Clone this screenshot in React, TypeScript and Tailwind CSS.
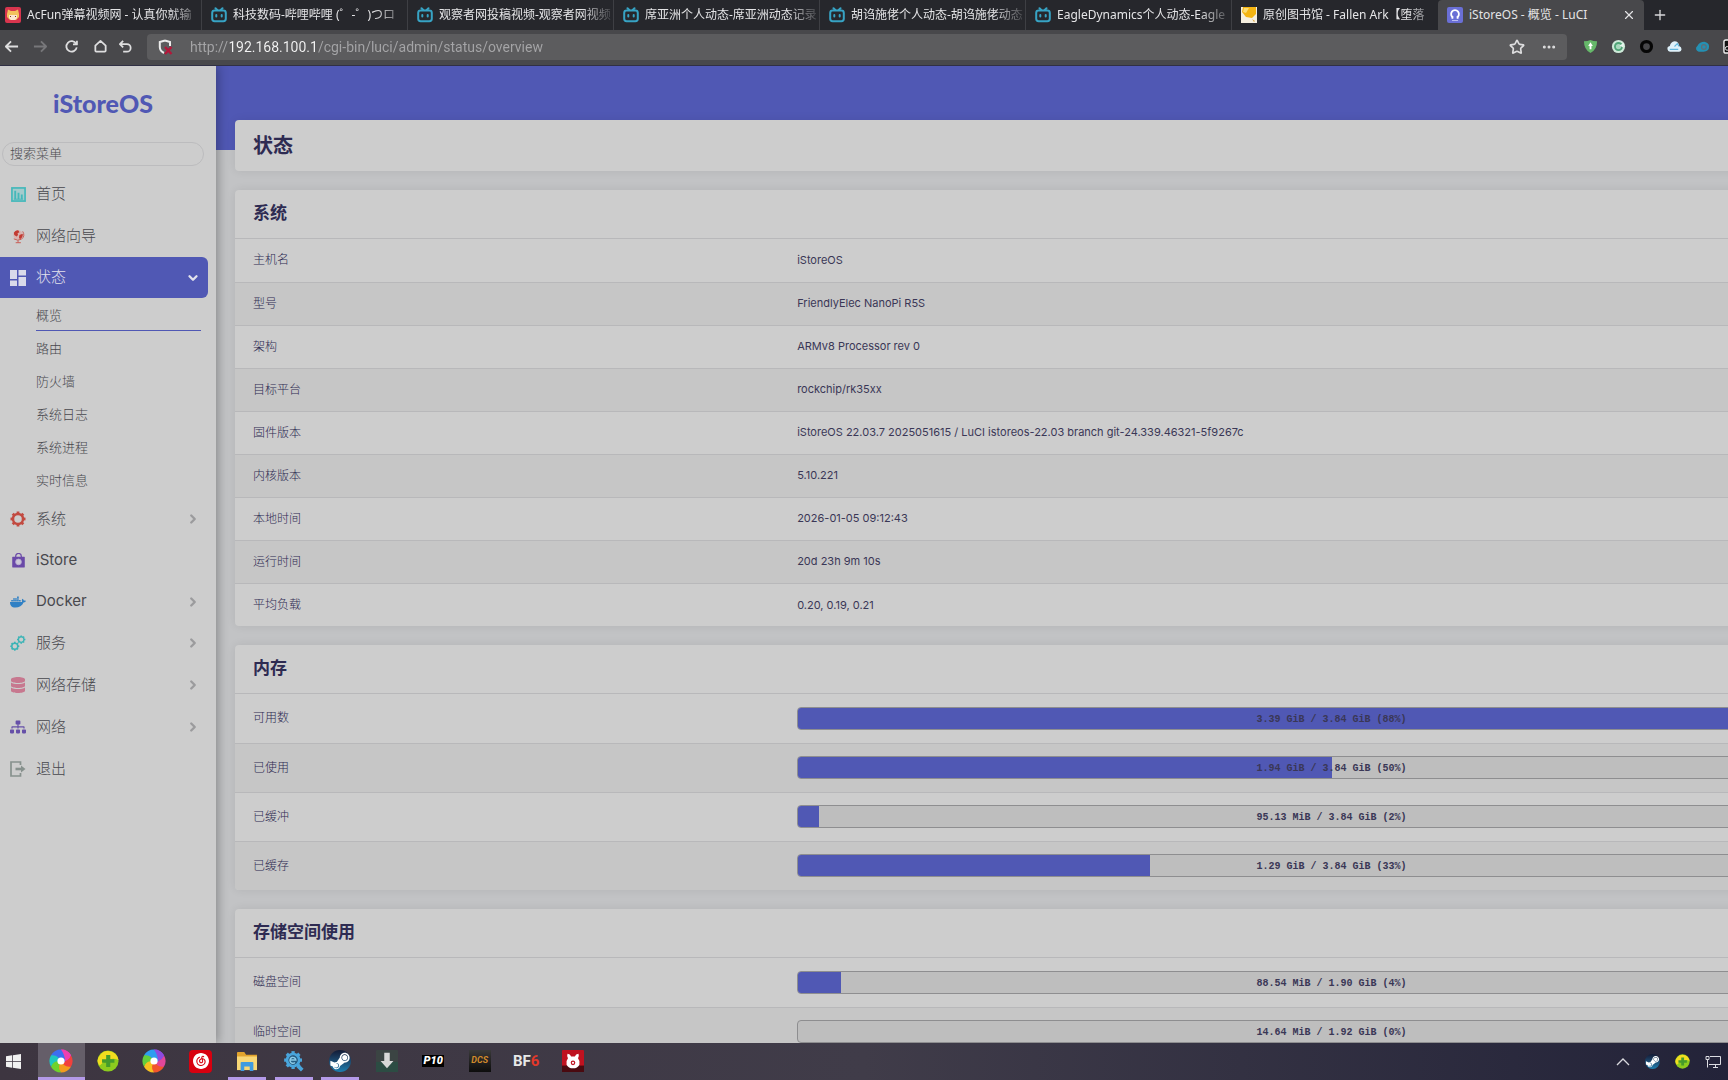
import { useState } from "react";
import clsx from "clsx";
import { FaDatabase, FaDocker, FaSitemap, FaSteamSymbol } from "react-icons/fa";
import { SiNeteasecloudmusic } from "react-icons/si";
import { ChevronDown, ChevronRight, Ellipsis, Plus, Star, X } from "lucide-react";

/* ---------- types ---------- */
type BrowserTab = {
  title: string;
  icon: React.ReactNode;
  active?: boolean;
};

type MenuItem = {
  label: string;
  icon: React.ReactNode;
  latin?: boolean;
  expandable?: boolean;
  children?: string[];
};

type Usage = {
  label: string;
  text: string;
  percent: number;
};

/* ---------- browser icons ---------- */
function TvIcon() {
  return (
    <svg viewBox="0 0 16 16" className="size-4" fill="none" stroke="#37a3c4" strokeWidth="2" strokeLinecap="round">
      <path d="M4.5 1.2 6.3 3M11.500 1.200 9.700 3" />
      <rect x="1.200" y="3.600" width="13.600" height="10.600" rx="2.400" />
      <path d="M5.300 8v1.600M10.700 8v1.600" />
    </svg>
  );
}

function AcfunIcon() {
  return (
    <svg viewBox="0 0 16 16" className="size-4">
      <rect width="16" height="16" rx="2" fill="#d8354e" />
      <path d="M2 7 3 2.500 6 4h4l3-1.500L14 7v3l-3 3H5l-3-3z" fill="#f3c35c" />
      <path d="M4 8h8v3l-2 2H6l-2-2z" fill="#fbe6d0" />
      <path d="M5.500 9v1M10.500 9v1" stroke="#7a3326" />
    </svg>
  );
}

function LibraryIcon() {
  return (
    <svg viewBox="0 0 16 16" className="size-4">
      <rect width="16" height="16" fill="#f6efe0" />
      <path d="M2 0h13v7l-4 4-6-1-4-5z" fill="#f5b512" />
      <path d="M3 1h5l-3 5-3-1z" fill="#fbdc74" />
      <path d="m11 12 3 2-1 1z" fill="#d9a441" />
    </svg>
  );
}

function LuciIcon() {
  return (
    <svg viewBox="0 0 16 16" className="size-4">
      <rect width="16" height="16" rx="2" fill="#6a6fd6" />
      <path d="M6.300 10.800H4.500M9.700 10.800h1.800M6.300 10.600a3.900 3.900 0 1 1 3.400 0" fill="none" stroke="#fff" strokeWidth="1.800" />
      <path d="M5 13.500h6" stroke="#b9bcf0" />
    </svg>
  );
}

const navIcon = {
  back: <path d="M15 8H2M7.500 2.500 2 8l5.500 5.500" />,
  forward: <path d="M1 8h13M8.500 2.500 14 8l-5.500 5.500" />,
  reload: <path d="M13 5.200A5.600 5.600 0 1 0 13.600 9M13.800 1.800v4H9.600" />,
  home: <path d="M8 2 2.500 7v5.500q0 1 1 1h9q1 0 1-1V7z" />,
  undo: <path d="M2.500 5.500h7a4 4 0 0 1 0 8H5.500M5.500 2 2 5.500 5.500 9" />,
};

function NavButton({ name, label, dim }: { name: keyof typeof navIcon; label: string; dim?: boolean }) {
  return (
    <button type="button" aria-label={label} className={dim ? "text-[#77777a]" : "text-[#dededf]"}>
      <svg viewBox="0 0 16 16" className="size-[15px]" fill="none" stroke="currentColor" strokeWidth="1.900" strokeLinejoin="round">
        {navIcon[name]}
      </svg>
    </button>
  );
}

function InsecureIcon() {
  return (
    <svg viewBox="0 0 16 16" className="size-4" fill="none">
      <path d="M8 1.500 13 3v4M7 14C4 12.500 2.800 10.500 2.800 8V3L8 1.500" stroke="#ececec" strokeWidth="2" />
      <path d="m8 8 6.500 7M14.500 8 8 15" stroke="#b3173a" strokeWidth="2.400" />
    </svg>
  );
}

const extensions = [
  {
    label: "安全防护",
    icon: (
      <>
        <path d="M1 2.500Q5 2.500 8 1q3 1.500 7 1.500 0 9-7 12.500Q1 11.500 1 2.500" fill="#66b86a" />
        <path d="M8 3.500 5.500 7.500H7V11h2V7.500h1.500z" fill="#fff" />
      </>
    ),
  },
  {
    label: "刷新助手",
    icon: (
      <>
        <circle cx="8" cy="8" r="7" fill="#cde9d8" />
        <circle cx="8" cy="8" r="3.800" fill="#a9d8bd" stroke="#4fa577" strokeWidth="2" />
        <path d="m9 7 5-3-1 5z" fill="#e8f7ee" />
      </>
    ),
  },
  {
    label: "圆环",
    icon: <circle cx="8" cy="8" r="5.300" fill="none" stroke="#060606" strokeWidth="3.400" />,
  },
  {
    label: "云盘",
    icon: (
      <>
        <path d="M4 13.500a3 3 0 0 1-1-6q1-4.500 5-5 4.500 0 5 5 2.500 1 2.500 3.500 0 2.500-2.500 2.500z" fill="#dff1fa" />
        <path d="M3 11h9M8 8l3-3 2 3" stroke="#5fb6de" strokeWidth="1.200" fill="none" />
      </>
    ),
  },
  {
    label: "云同步",
    icon: (
      <>
        <path d="M4 13.500a3.300 3.300 0 0 1-1.500-6Q5 3 10 3q5 1 5 5 0 5.500-6 5.500z" fill="#2490b3" />
        <circle cx="9.500" cy="8.500" r="2.500" fill="none" stroke="#5e6d78" strokeWidth="1.300" />
      </>
    ),
  },
];

/* ---------- sidebar icons ---------- */
function HomeChartIcon() {
  return (
    <svg viewBox="0 0 16 16" className="size-[15px]" fill="none" stroke="#45b8ba">
      <rect x="1" y="1" width="14" height="14" fill="#a5cbcc" strokeWidth="1.800" />
      <path d="M4.500 4v9M8 6v7M11.500 8v5" strokeWidth="2" />
      <path d="M3 13h10" />
    </svg>
  );
}

function GlobeIcon() {
  return (
    <svg viewBox="0 0 16 16" className="size-[15px]">
      <circle cx="7.500" cy="6.300" r="5" fill="#d9b3b0" />
      <path d="M3 4q2-3.500 5-2.500l1 2-2 1 .5 2L6 8 3.500 6.500zM9 6.500l3.500-1.500q.5 4-3 6L8.500 9z" fill="#c23a32" />
      <path d="M12.500 2.500q3 5-1.500 8.500-4 2-8-.5M7.500 12v2.500M5 14.600h5.500" fill="none" stroke="#c9574f" />
    </svg>
  );
}

function DashboardIcon() {
  return (
    <svg viewBox="0 0 16 16" className="size-4" fill="#d9daea">
      <path d="M0 0h7v9H0zM0 10.500h7V16H0zM8.500 0H16v5.500H8.500zM8.500 7H16v9H8.500z" />
    </svg>
  );
}

/* toothed ring: eight teeth round a solid band */
function Gear({ x, y, r, color }: { x: number; y: number; r: number; color: string }) {
  return (
    <g fill="none" stroke={color} transform={`translate(${x} ${y})`}>
      <circle r={r} strokeWidth={r * 0.5} />
      {[0, 45, 90, 135, 180, 225, 270, 315].map((a) => (
        <path key={a} d={`M0 ${-r}V${-r * 1.5}`} strokeWidth={r * 0.55} transform={`rotate(${a})`} />
      ))}
    </g>
  );
}

function BagIcon() {
  return (
    <svg viewBox="0 0 16 16" className="size-[15px]">
      <path d="M5 4.500V3.500a3 3 0 0 1 6 0v1" fill="none" stroke="#6a49a8" strokeWidth="1.300" />
      <rect x="1.300" y="4" width="13.400" height="11.500" rx="0.500" fill="#6a49a8" />
      <circle cx="8" cy="9.500" r="3" fill="#cdc8d8" stroke="#b9aed2" strokeWidth="1" />
    </svg>
  );
}

function LogoutIcon() {
  return (
    <svg viewBox="0 0 16 16" className="size-4" fill="none" stroke="#87918d">
      <path d="M10.500 4V1H1v14h9.500v-3" strokeWidth="1.700" />
      <path d="M5.500 8H11" strokeWidth="2.600" />
      <path d="m11 4.500 4.500 3.500L11 11.500z" fill="#87918d" stroke="none" />
    </svg>
  );
}

/* ---------- taskbar icons ---------- */
function SwirlIcon({ alt }: { alt?: boolean }) {
  const colors = alt
    ? ["#8c4be0", "#e0479a", "#f2552c", "#f7c11f", "#62cf3c", "#2d9df0"]
    : ["#ee3fb0", "#f2403c", "#f39b1d", "#6fd22c", "#1fc6c0", "#3d6df0"];
  return (
    <svg viewBox="-12 -12 24 24" className="size-[24px]">
      <circle r="9" fill={colors[0]} />
      {colors.map((c, i) => (
        <path key={c} d="M0-11.500A11.500 11.500 0 0 1 10-5.700Q9 1 2 4L-2 1Q5-5 0-11.500" fill={c} transform={`rotate(${i * 60})`} />
      ))}
      <path d="M0-11.500A11.500 11.500 0 0 1 10-5.700Q7 0 4 0 4-6 0-11.500" fill={colors[0]} />
      <circle r="3.600" fill="#fff" />
    </svg>
  );
}

function SafeIcon({ size }: { size: string }) {
  return (
    <svg viewBox="0 0 24 24" className={size}>
      <circle cx="12" cy="12" r="11.500" fill="#8ccb1e" />
      <path d="M3 6Q8-1 16 2q6 2 7.500 9Q14 6 3 17-2 12 3 6" fill="#f2dd1f" />
      <path d="M10 5.500h4.500V10H19v4h-4.500v4.500H10V14H5.500v-4H10z" fill="#459c2b" />
    </svg>
  );
}

function FolderIcon() {
  return (
    <svg viewBox="0 0 24 22" className="h-[20px] w-[22px]">
      <path d="M1 2q0-1 1-1h7l2 3h12v17H1z" fill="#e2a42d" />
      <path d="M1 6h22v15H1z" fill="#f8d776" />
      <path d="M5 22v-9q0-1 1-1h12q1 0 1 1v9h-4v-5H9v5z" fill="#3f9be0" />
    </svg>
  );
}

function ToolIcon() {
  return (
    <svg viewBox="-12 -12 24 24" className="size-[22px]">
      <Gear x={-1} y={-1} r={6.500} color="#49a5dc" />
      <circle cx="-1" cy="-1" r="5" fill="#245f86" />
      <path d="M-4-1h6a3.200 3.200 0 1 0-1 2.600" fill="none" stroke="#8ccbe8" strokeWidth="1.600" />
      <path d="M4 5 9 10" stroke="#49a5dc" strokeWidth="4" />
    </svg>
  );
}

function SteamIcon({ size }: { size: string }) {
  return (
    <span className={clsx("flex items-center justify-center rounded-full bg-gradient-to-b from-[#121b36] to-[#1c7fb0]", size)}>
      <FaSteamSymbol className="size-full text-white" />
    </span>
  );
}

function DownloadIcon() {
  return (
    <svg viewBox="0 0 24 24" className="size-[22px]">
      <rect width="24" height="24" rx="1" fill="#3b4443" />
      <path d="M0 13h24v11H0z" fill="#2c4c43" />
      <path d="M9 3h6v9h4l-7 8-7-8h4z" fill="#d8d8d8" />
    </svg>
  );
}

function BearIcon() {
  return (
    <svg viewBox="0 0 24 24" className="size-[22px]">
      <rect width="24" height="24" rx="1" fill="#bf1220" />
      <path d="M0 17h24v7H0z" fill="#4a0a10" />
      <path d="M6 4q3 0 4 3h4q1-3 4-3 1 3-.5 5Q20 12 19 16q-2 4-7 4t-7-4q-1-4 1.500-7Q5 7 6 4" fill="#fff" />
      <circle cx="12" cy="14" r="2.500" fill="#bf1220" />
      <circle cx="12" cy="14" r="1.200" fill="#fff" />
    </svg>
  );
}

/* ---------- data ---------- */
const tabs: BrowserTab[] = [
  { title: "AcFun弹幕视频网 - 认真你就输", icon: <AcfunIcon /> },
  { title: "科技数码-哔哩哔哩 (゜-゜)つロ", icon: <TvIcon /> },
  { title: "观察者网投稿视频-观察者网视频", icon: <TvIcon /> },
  { title: "席亚洲个人动态-席亚洲动态记录", icon: <TvIcon /> },
  { title: "胡诌施佬个人动态-胡诌施佬动态", icon: <TvIcon /> },
  { title: "EagleDynamics个人动态-Eagle", icon: <TvIcon /> },
  { title: "原创图书馆 - Fallen Ark【堕落", icon: <LibraryIcon /> },
  { title: "iStoreOS - 概览 - LuCI", icon: <LuciIcon />, active: true },
];

const menu: MenuItem[] = [
  { label: "首页", icon: <HomeChartIcon /> },
  { label: "网络向导", icon: <GlobeIcon /> },
  {
    label: "状态",
    icon: <DashboardIcon />,
    children: ["概览", "路由", "防火墙", "系统日志", "系统进程", "实时信息"],
  },
  {
    label: "系统",
    expandable: true,
    icon: (
      <svg viewBox="0 0 16 16" className="size-4">
        <Gear x={8} y={8} r={5} color="#c24a40" />
      </svg>
    ),
  },
  { label: "iStore", latin: true, icon: <BagIcon /> },
  { label: "Docker", latin: true, expandable: true, icon: <FaDocker className="size-4 text-[#3080c4]" /> },
  {
    label: "服务",
    expandable: true,
    icon: (
      <svg viewBox="0 0 16 16" className="size-4">
        <Gear x={4.800} y={11.200} r={3} color="#3cb4b6" />
        <Gear x={11.200} y={4.600} r={2.800} color="#3cb4b6" />
      </svg>
    ),
  },
  { label: "网络存储", expandable: true, icon: <FaDatabase className="size-4 text-[#c7788f]" /> },
  { label: "网络", expandable: true, icon: <FaSitemap className="size-4 text-[#6650a8]" /> },
  { label: "退出", icon: <LogoutIcon /> },
];

const systemRows: [string, string][] = [
  ["主机名", "iStoreOS"],
  ["型号", "FriendlyElec NanoPi R5S"],
  ["架构", "ARMv8 Processor rev 0"],
  ["目标平台", "rockchip/rk35xx"],
  ["固件版本", "iStoreOS 22.03.7 2025051615 / LuCI istoreos-22.03 branch git-24.339.46321-5f9267c"],
  ["内核版本", "5.10.221"],
  ["本地时间", "2026-01-05 09:12:43"],
  ["运行时间", "20d 23h 9m 10s"],
  ["平均负载", "0.20, 0.19, 0.21"],
];

const memoryRows: Usage[] = [
  { label: "可用数", text: "3.39 GiB / 3.84 GiB (88%)", percent: 88 },
  { label: "已使用", text: "1.94 GiB / 3.84 GiB (50%)", percent: 50 },
  { label: "已缓冲", text: "95.13 MiB / 3.84 GiB (2%)", percent: 2 },
  { label: "已缓存", text: "1.29 GiB / 3.84 GiB (33%)", percent: 33 },
];

const storageRows: Usage[] = [
  { label: "磁盘空间", text: "88.54 MiB / 1.90 GiB (4%)", percent: 4 },
  { label: "临时空间", text: "14.64 MiB / 1.92 GiB (0%)", percent: 0 },
];

const taskbarApps = [
  { label: "浏览器", icon: <SwirlIcon />, active: true },
  { label: "安全卫士", icon: <SafeIcon size="size-[22px]" /> },
  { label: "极速浏览器", icon: <SwirlIcon alt /> },
  {
    label: "网易云音乐",
    icon: (
      <span className="flex size-[23px] items-center justify-center rounded bg-[#d8000f]">
        <SiNeteasecloudmusic className="size-4 text-white" />
      </span>
    ),
  },
  { label: "文件资源管理器", icon: <FolderIcon />, running: true },
  { label: "设置工具", icon: <ToolIcon />, running: true },
  { label: "Steam", icon: <SteamIcon size="size-[22px]" />, running: true },
  { label: "下载", icon: <DownloadIcon /> },
  {
    label: "P10",
    icon: (
      <span className="flex h-3 w-[22px] items-center justify-center bg-black text-[11px] font-black italic leading-3 text-white">P10</span>
    ),
  },
  {
    label: "DCS",
    icon: (
      <span className="flex size-[22px] items-center justify-center bg-gradient-to-b from-[#3a3a3a] to-[#0d0d0d] text-[9px] font-bold italic text-[#d18a2a]">DCS</span>
    ),
  },
  {
    label: "BF6",
    icon: (
      <span className="text-[15px] font-bold leading-none text-[#e8e8e8]">
        BF<span className="text-[#e2382a]">6</span>
      </span>
    ),
  },
  { label: "弹幕游戏", icon: <BearIcon /> },
];

/* ---------- browser chrome ---------- */
function TabStrip() {
  return (
    <div className="flex h-[30px] shrink-0 items-stretch overflow-hidden bg-[#26272c]">
      {tabs.map((t, i) => (
        <div
          key={t.title}
          className={clsx(
            "flex items-center gap-1.5 text-xs text-[#e4e4e6]",
            i === 0 ? "w-[202px] pl-[5px]" : "w-[206px] pl-[9px]",
            t.active ? "rounded-t bg-[#48484b]" : i < 6 && "border-r border-[#3e3f44]"
          )}
        >
          <span className="shrink-0">{t.icon}</span>
          <a
            href="#"
            className={clsx(
              "flex-1 whitespace-nowrap",
              !t.active && "[mask-image:linear-gradient(to_right,black_82%,rgba(0,0,0,0.1))]"
            )}
          >
            {t.title}
          </a>
          {t.active && (
            <button type="button" aria-label="关闭标签页" className="mr-2">
              <X className="size-3.5" />
            </button>
          )}
        </div>
      ))}
      <button type="button" aria-label="新建标签页" className="ml-2 text-[#d8d8da]">
        <Plus className="size-4" />
      </button>
    </div>
  );
}

function Toolbar() {
  const [url, setUrl] = useState("http://192.168.100.1/cgi-bin/luci/admin/status/overview");
  return (
    <div className="flex h-9 shrink-0 items-center overflow-hidden border-b border-[#303044] bg-[#48484b] pb-0.5">
      <div className="flex w-[147px] shrink-0 items-center pl-1">
        <NavButton name="back" label="后退" />
        <span className="w-3.5" />
        <NavButton name="forward" label="前进" dim />
        <span className="w-4" />
        <NavButton name="reload" label="刷新" />
        <span className="w-3.5" />
        <NavButton name="home" label="主页" />
        <span className="w-2.5" />
        <NavButton name="undo" label="恢复" />
      </div>
      <div className="flex h-[26px] flex-1 items-center rounded bg-[#5c5c5e] px-2.5">
        <InsecureIcon />
        <input
          aria-label="地址"
          value={url}
          onChange={(e) => setUrl(e.target.value)}
          className="ml-[17px] flex-1 bg-[linear-gradient(to_right,#a5a5a7_40px,#f4f4f4_40px,#f4f4f4_126px,#a5a5a7_126px)] bg-clip-text font-['Roboto',sans-serif] text-sm text-transparent outline-none"
        />
        <button type="button" aria-label="收藏" className="mr-4 text-[#dededf]">
          <Star className="size-4" strokeWidth={2.500} />
        </button>
        <button type="button" aria-label="更多" className="text-[#dededf]">
          <Ellipsis className="size-4" strokeWidth={2.500} />
        </button>
      </div>
      <div className="flex w-[161px] shrink-0 items-center gap-[13px] overflow-hidden pl-4">
        {extensions.map((x) => (
          <button key={x.label} type="button" aria-label={x.label} className="shrink-0">
            <svg viewBox="0 0 16 16" className="size-[15px]">
              {x.icon}
            </svg>
          </button>
        ))}
        <button type="button" aria-label="扩展" className="shrink-0">
          <svg viewBox="0 0 16 16" className="size-[15px]">
            <rect x="1" y="1" width="14" height="14" rx="2" fill="#111" stroke="#eee" strokeWidth="1.500" />
            <circle cx="4.500" cy="10" r="2" fill="none" stroke="#eee" />
          </svg>
        </button>
      </div>
    </div>
  );
}

/* ---------- sidebar ---------- */
function Sidebar() {
  const [query, setQuery] = useState("");
  return (
    <aside className="relative w-[216px] shrink-0 bg-[#cdcdcd] text-[#48484d] shadow-[2px_0_10px_rgba(0,0,0,0.3)]">
      <div className="flex h-[76px] items-center justify-center pb-0.5 pr-2.5">
        <a href="#" className="font-['Lato'] text-[25px] font-black leading-8 text-[#5058b4]">
          iStoreOS
        </a>
      </div>
      <div className="pl-0.5 pr-3">
        <input
          type="search"
          aria-label="搜索菜单"
          placeholder="搜索菜单"
          value={query}
          onChange={(e) => setQuery(e.target.value)}
          className="block h-6 w-full rounded-full border border-[#bcbcbe] bg-transparent px-[7px] pb-0.5 text-[13px] font-light outline-none placeholder:text-[#4c4c50]"
        />
      </div>
      <nav className="mt-[7px]">
        <ul>
          {menu.map((m) => (
            <li key={m.label}>
              <a
                href="#"
                className={clsx(
                  "flex items-center pl-2.5 text-[15px]",
                  m.children ? "mr-2 h-[41px] rounded-r-md bg-[#5058b4] text-[#e2e2ec]" : m.latin ? "h-[41px]" : "h-[42px]",
                  m.latin ? "font-normal" : "font-light"
                )}
              >
                <span className="flex w-4 justify-center">{m.icon}</span>
                <span className="ml-2.5 flex-1">{m.label}</span>
                {m.children && <ChevronDown className="mr-2 size-3.5" strokeWidth={4} />}
                {m.expandable && <ChevronRight className="mr-4 size-3.5 text-[#9b9b9d]" strokeWidth={4} />}
              </a>
              {m.children && (
                <ul className="pb-0.5 pl-9 pr-[15px]">
                  {m.children.map((c, i) => (
                    <li key={c}>
                      <a
                        href="#"
                        className={clsx(
                          "flex h-[33px] items-center border-b pt-1 text-[13px] font-light",
                          i === 0 ? "border-[#5058b4]" : "border-transparent"
                        )}
                      >
                        {c}
                      </a>
                    </li>
                  ))}
                </ul>
              )}
            </li>
          ))}
        </ul>
      </nav>
    </aside>
  );
}

/* ---------- overview cards ---------- */
function Card({ title, children }: { title: string; children: React.ReactNode }) {
  return (
    <section className="overflow-hidden rounded bg-[#cdcdcd] shadow-[0_0_10px_rgba(0,0,0,0.08)]">
      <h3 className="flex h-[49px] items-center border-b border-[#b8b8ba] px-[18px] text-[17px] font-bold">{title}</h3>
      <table className="w-full table-fixed border-collapse text-[11px]">
        <tbody>{children}</tbody>
      </table>
    </section>
  );
}

function Row({ label, children, tall }: { label: string; children: React.ReactNode; tall?: boolean }) {
  return (
    <tr className="border-b border-[#b8b8ba] last:border-b-0 even:bg-[#c6c6c6]">
      <th scope="row" className={clsx("w-[33%] px-[18px] text-left text-xs font-light", tall ? "h-[49px]" : "h-[43px]")}>
        {label}
      </th>
      <td className="px-[18px] py-0 text-[#3a3756]">{children}</td>
    </tr>
  );
}

function UsageRow({ label, text, percent }: Usage) {
  return (
    <Row label={label} tall>
      <div className="grid h-[23px] overflow-hidden rounded border border-[#8e8e90] bg-[#bebebe]">
        <div className="col-start-1 row-start-1 bg-[#5058b4]" style={{ width: `${percent}%` }} />
        <div className="col-start-1 row-start-1 flex items-center justify-center pt-0.5 font-['Liberation_Mono',monospace] text-[10px] font-bold">
          {text}
        </div>
      </div>
    </Row>
  );
}

/* ---------- taskbar ---------- */
function Taskbar() {
  return (
    <footer className="flex h-[37px] shrink-0 items-stretch overflow-hidden bg-gradient-to-r from-[#3d3540] via-[#403c49] to-[#232339] font-['Roboto',sans-serif]">
      <button type="button" aria-label="开始" className="flex w-[38px] items-center pl-1.5">
        <svg viewBox="0 0 16 16" className="size-[15px]" fill="#f1f1f1">
          <path d="M0 2.300 6.500 1.400v6.200H0zM7.300 1.300 16 0v7.600H7.300zM0 8.400h6.500v6.200L0 13.700zM7.300 8.400H16V16l-8.700-1.300z" />
        </svg>
      </button>
      <div className="grid w-[558px] grid-cols-12">
        {taskbarApps.map((a) => (
          <button
            key={a.label}
            type="button"
            aria-label={a.label}
            className={clsx("flex flex-col items-center", a.active && "bg-[#655e69]")}
          >
            <span className="flex flex-1 items-center pt-0.5">{a.icon}</span>
            <span
              className={clsx("h-[3px]", a.active ? "w-full bg-[#b49ae8]" : "w-[38px]", a.running && "bg-[#b49ae8]")}
            />
          </button>
        ))}
      </div>
      <div className="ml-auto flex items-center gap-[15px] pr-[7px]">
        <button type="button" aria-label="显示隐藏的图标">
          <svg viewBox="0 0 14 14" className="size-3.5" fill="none" stroke="#d9d9de" strokeWidth="1.300">
            <path d="m1 10 6-6 6 6" />
          </svg>
        </button>
        <button type="button" aria-label="Steam">
          <SteamIcon size="size-[15px]" />
        </button>
        <button type="button" aria-label="安全卫士">
          <SafeIcon size="size-[15px]" />
        </button>
        <button type="button" aria-label="网络">
          <svg viewBox="0 0 16 14" className="h-3.5 w-4" fill="none" stroke="#dcdce2">
            <path d="M5 1.500h10.500v8H4M8 12.500h5M10.500 9.500v3M1 1.500h3v3H1zM2.500 4.500v8" />
          </svg>
        </button>
      </div>
    </footer>
  );
}

/* ---------- page ---------- */
export default function App() {
  return (
    <div className="flex h-screen flex-col overflow-hidden font-['Noto_Sans','Noto_Sans_CJK_SC',sans-serif]">
      <header className="shrink-0">
        <TabStrip />
        <Toolbar />
      </header>

      <div className="flex min-h-0 flex-1 overflow-hidden bg-[#c2c3c5] font-['Inter','Noto_Sans_CJK_SC',sans-serif]">
        <Sidebar />
        {/* content runs past the right edge of the window */}
        <main className="-mr-[175px] min-w-0 flex-1 bg-[linear-gradient(#5058b4_84px,transparent_84px)] px-[19px] pt-[54px] text-[#2e2b52]">
          <div className="flex flex-col gap-[19px]">
            <h2 className="flex h-[51px] items-center rounded bg-[#cdcdcd] px-[18px] text-xl font-bold shadow-[0_0_10px_rgba(0,0,0,0.08)]">
              状态
            </h2>

            <Card title="系统">
              {systemRows.map(([label, value]) => (
                <Row key={label} label={label}>
                  {value}
                </Row>
              ))}
            </Card>

            <Card title="内存">
              {memoryRows.map((r) => (
                <UsageRow key={r.label} {...r} />
              ))}
            </Card>

            <Card title="存储空间使用">
              {storageRows.map((r) => (
                <UsageRow key={r.label} {...r} />
              ))}
            </Card>
          </div>
        </main>
      </div>

      <Taskbar />
    </div>
  );
}
